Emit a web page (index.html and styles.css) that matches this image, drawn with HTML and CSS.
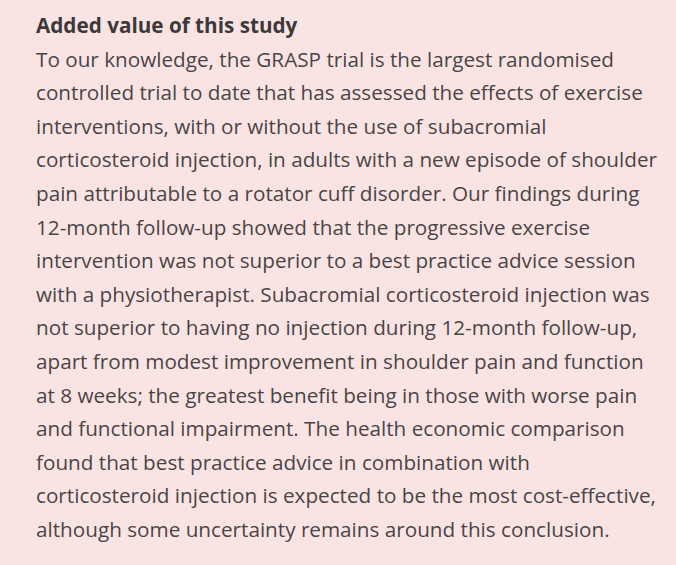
FILE: index.html
```html
<!DOCTYPE html>
<html lang="en">
<head>
<meta charset="utf-8">
<title>Added value of this study</title>
<link rel="stylesheet" href="styles.css">
</head>
<body>
<section class="panel">
<h2 class="title">Added value of this study</h2>
<p class="body">To our knowledge, the GRASP trial is the largest randomised<br>
controlled trial to date that has assessed the effects of exercise<br>
interventions, with or without the use of subacromial<br>
corticosteroid injection, in adults with a new episode of shoulder<br>
pain attributable to a rotator cuff disorder. Our findings during<br>
12-month follow-up showed that the progressive exercise<br>
intervention was not superior to a best practice advice session<br>
with a physiotherapist. Subacromial corticosteroid injection was<br>
not superior to having no injection during 12-month follow-up,<br>
apart from modest improvement in shoulder pain and function<br>
at 8 weeks; the greatest benefit being in those with worse pain<br>
and functional impairment. The health economic comparison<br>
found that best practice advice in combination with<br>
corticosteroid injection is expected to be the most cost-effective,<br>
although some uncertainty remains around this conclusion.</p>
</section>
</body>
</html>
```
FILE: styles.css
```css
html, body {
  margin: 0;
  padding: 0;
  background: #fae4e3;
}
.panel {
  width: 676px;
  height: 565px;
  box-sizing: border-box;
  padding: 9px 0 0 36px;
  font-family: "Open Sans", "Liberation Sans", sans-serif;
  color: #4a4446;
}
.title {
  margin: 0;
  font-size: 20.7px;
  line-height: 33.6px;
  font-weight: 700;
  color: #3d393a;
}
.body {
  margin: 0;
  font-size: 20.7px;
  line-height: 33.6px;
  white-space: nowrap;
}
```
